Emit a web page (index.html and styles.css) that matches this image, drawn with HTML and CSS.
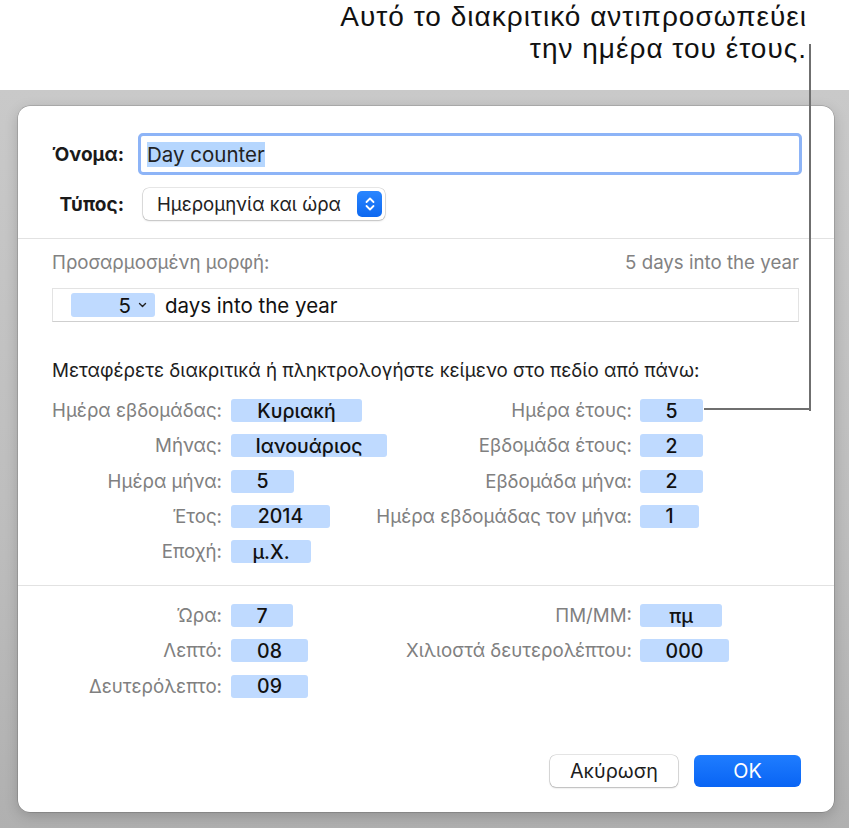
FILE: index.html
```html
<!DOCTYPE html>
<html lang="el">
<head>
<meta charset="utf-8">
<title>Custom format</title>
<link rel="stylesheet" href="styles.css">
</head>
<body>
<div class="page">
  <div class="callout">
    <p>Αυτό το διακριτικό αντιπροσωπεύει<br>την ημέρα του έτους.</p>
  </div>
  <div class="stage">
    <div class="dialog">
      <div class="head">
        <div class="hlabel">Όνομα:</div>
        <div class="namefield"><span class="sel">Day counter</span></div>
        <div class="hlabel">Τύπος:</div>
        <div class="popup">
          <span>Ημερομηνία και ώρα</span>
          <span class="stepper">
            <svg width="12" height="18" viewBox="0 0 12 18"><path d="M2.5 7 L6 3.5 L9.5 7 M2.5 11 L6 14.5 L9.5 11" fill="none" stroke="#fff" stroke-width="1.8" stroke-linecap="round" stroke-linejoin="round"/></svg>
          </span>
        </div>
      </div>
      <div class="sep"></div>
      <div class="section">
        <div class="fmtrow">
          <span>Προσαρμοσμένη μορφή:</span>
          <span>5 days into the year</span>
        </div>
        <div class="fmtbox">
          <span class="fmttoken">5 <svg width="9" height="6" viewBox="0 0 9 6"><path d="M1.5 1.5 L4.5 4.5 L7.5 1.5" fill="none" stroke="#222" stroke-width="1.4" stroke-linecap="round" stroke-linejoin="round"/></svg></span>
          <span class="fmttext">days into the year</span>
        </div>
        <p class="instr">Μεταφέρετε διακριτικά ή πληκτρολογήστε κείμενο στο πεδίο από πάνω:</p>
        <div class="tokens">
          <span class="lbl">Ημέρα εβδομάδας:</span><span class="tok w131">Κυριακή</span>
          <span class="lbl">Ημέρα έτους:</span><span class="tok w63">5</span>
          <span class="lbl">Μήνας:</span><span class="tok w156">Ιανουάριος</span>
          <span class="lbl">Εβδομάδα έτους:</span><span class="tok w63">2</span>
          <span class="lbl">Ημέρα μήνα:</span><span class="tok w63">5</span>
          <span class="lbl">Εβδομάδα μήνα:</span><span class="tok w63">2</span>
          <span class="lbl">Έτος:</span><span class="tok w99">2014</span>
          <span class="lbl">Ημέρα εβδομάδας τον μήνα:</span><span class="tok w59">1</span>
          <span class="lbl">Εποχή:</span><span class="tok w80">μ.Χ.</span>
          <span></span><span></span>
        </div>
      </div>
      <div class="sep sep2"></div>
      <div class="section">
        <div class="tokens time">
          <span class="lbl">Ώρα:</span><span class="tok w62">7</span>
          <span class="lbl">ΠΜ/ΜΜ:</span><span class="tok w82">πμ</span>
          <span class="lbl">Λεπτό:</span><span class="tok w77">08</span>
          <span class="lbl">Χιλιοστά δευτερολέπτου:</span><span class="tok w89">000</span>
          <span class="lbl">Δευτερόλεπτο:</span><span class="tok w77">09</span>
          <span></span><span></span>
        </div>
      </div>
      <div class="buttons">
        <button class="btn cancel">Ακύρωση</button>
        <button class="btn ok">OK</button>
      </div>
    </div>
  </div>
  <div class="leader-v"></div>
  <div class="leader-h"></div>
</div>
</body>
</html>
```

FILE: styles.css
```css
* { box-sizing: border-box; }
html, body { margin: 0; padding: 0; background: #fff; }
body {
  font-family: Inter, "Noto Sans", "DejaVu Sans", sans-serif;
  color: #1d1d1d;
  width: 849px;
  height: 828px;
  overflow: hidden;
}
.page { position: relative; width: 849px; height: 828px; }

.callout {
  height: 90px;
  display: flex;
  justify-content: flex-end;
  padding: 1px 42px 0 0;
}
.callout p {
  margin: 0;
  text-align: right;
  font-family: "Liberation Sans", Arial, sans-serif;
  font-size: 28px;
  letter-spacing: 1px;
  line-height: 32px;
  color: #111;
}

.stage {
  height: 738px;
  background: linear-gradient(180deg, #c9c9c9 0%, #bdbdbd 60%, #b0b0b0 100%);
  padding: 16px 15px 16px 18px;
}
.dialog {
  width: 816px;
  height: 706px;
  background: #fff;
  border-radius: 12px;
  box-shadow: 0 0 0 0.5px rgba(0,0,0,0.25), 0 4px 14px rgba(0,0,0,0.18);
  display: flex;
  flex-direction: column;
}

.head {
  display: grid;
  grid-template-columns: 106px auto;
  column-gap: 14px;
  row-gap: 13px;
  align-items: center;
  padding: 27px 32px 0 0;
  justify-content: start;
}
.hlabel {
  text-align: right;
  font-weight: 700;
  font-size: 19px;
  color: #1a1a1a;
  white-space: nowrap;
}
.namefield {
  width: 664px;
  height: 42px;
  border: 3.5px solid #8db4f7;
  border-radius: 5px;
  padding: 0 6px;
  display: flex;
  align-items: center;
  font-size: 20.5px;
  color: #222;
}
.sel { background: #b5d6fe; line-height: 25px; }
.popup {
  justify-self: start;
  margin-left: 5px;
  width: 242px;
  height: 32px;
  border-radius: 6px;
  background: #fff;
  box-shadow: 0 0 0 0.6px rgba(0,0,0,0.18), 0 1px 2px rgba(0,0,0,0.18);
  display: flex;
  align-items: center;
  justify-content: space-between;
  padding: 0 3px 0 14px;
  font-size: 18.6px;
  color: #222;
  white-space: nowrap;
}
.stepper {
  width: 25px;
  height: 26px;
  border-radius: 5px;
  background: linear-gradient(180deg, #2a86ff, #0d68f0);
  display: flex;
  align-items: center;
  justify-content: center;
}

.sep { height: 1px; background: #e2e2e2; margin-top: 18px; flex: none; }
.sep2 { margin-top: 22px; }

.section { padding: 0 35px 0 34px; }
.fmtrow {
  display: flex;
  justify-content: space-between;
  font-size: 18.7px;
  color: #828282;
  margin-top: 13px;
  line-height: 22px;
}
.fmtbox {
  margin-top: 14px;
  height: 34px;
  border: 1px solid #e3e3e3;
  border-bottom-color: #cfcfcf;
  display: flex;
  align-items: center;
  padding-left: 18px;
  gap: 10px;
}
.fmttoken {
  width: 84px;
  height: 24px;
  background: #bfdaff;
  border-radius: 3px;
  display: flex;
  align-items: center;
  justify-content: flex-end;
  gap: 7px;
  padding-right: 8px;
  font-size: 20.5px;
  color: #111;
}
.fmttext { font-size: 20.5px; color: #111; }

.instr {
  margin: 38px 0 0 0;
  font-size: 18.8px;
  color: #1d1d1d;
  line-height: 22px;
  white-space: nowrap;
}

.tokens {
  display: grid;
  grid-template-columns: 170px 132px 260px auto;
  grid-auto-rows: 23px;
  column-gap: 9px;
  row-gap: 12.3px;
  align-items: center;
  margin-top: 17px;
}
.tokens .tok:nth-child(4n) { margin-left: -1px; }
.tokens.time { margin-top: 18px; }
.lbl {
  text-align: right;
  font-size: 18.7px;
  line-height: 23px;
  color: #808080;
  white-space: nowrap;
}
.tok {
  justify-self: start;
  height: 23px;
  background: #bfdaff;
  border-radius: 3px;
  display: flex;
  align-items: center;
  justify-content: center;
  font-size: 19.5px;
  font-weight: 500;
  color: #111;
}
.w131 { width: 131px; }
.w156 { width: 156px; }
.w63 { width: 63px; }
.w62 { width: 62px; }
.w59 { width: 59px; }
.w99 { width: 99px; }
.w80 { width: 80px; }
.w77 { width: 77px; }
.w82 { width: 82px; }
.w89 { width: 89px; }

.buttons {
  margin-top: auto;
  display: flex;
  justify-content: flex-end;
  gap: 16px;
  padding: 0 33px 25px 0;
}
.btn {
  font-family: inherit;
  height: 32px;
  border-radius: 6px;
  font-size: 19.8px;
  border: none;
  padding: 0;
}
.cancel {
  width: 128px;
  background: #fff;
  color: #1d1d1d;
  box-shadow: 0 0 0 0.6px rgba(0,0,0,0.2), 0 1px 2px rgba(0,0,0,0.2);
}
.ok {
  width: 107px;
  background: linear-gradient(180deg, #1f7dff, #0964f4);
  color: #fff;
}

.leader-v {
  position: absolute;
  left: 809px;
  top: 44px;
  width: 2px;
  height: 367px;
  background: #6f6f6f;
}
.leader-h {
  position: absolute;
  left: 704px;
  top: 408px;
  width: 107px;
  height: 2px;
  background: #6f6f6f;
}
```
